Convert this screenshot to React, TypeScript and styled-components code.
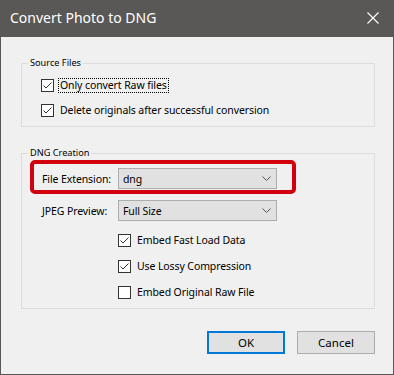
import React from 'react';
import styled, { createGlobalStyle } from 'styled-components';

const Global = createGlobalStyle`
  html, body { margin: 0; padding: 0; background: #f0f0f0; }
  * { box-sizing: border-box; }
`;

const Window = styled.div`
  width: 394px;
  height: 375px;
  display: flex;
  flex-direction: column;
  background: #f0f0f0;
  border: 1px solid #5a5856;
  border-top: none;
  font-family: "Noto Sans", "Open Sans", sans-serif;
  font-size: 10.5px;
  letter-spacing: -0.1px;
  color: #000;
`;

const TitleBar = styled.div`
  height: 37px;
  flex: none;
  margin: 0 -1px;
  background: #5a5856;
  color: #fff;
  display: flex;
  align-items: center;
  justify-content: space-between;
  padding: 0 15px 2px 10px;
  font-size: 14px;
  letter-spacing: 0;
`;

const Body = styled.div`
  flex: 1;
  display: flex;
  flex-direction: column;
  padding: 19px 18px 0 20px;
`;

const Group = styled.fieldset<{ top?: number }>`
  margin: ${p => p.top ?? 0}px 0 0 0;
  padding: 0;
  border: 1px solid #dcdcdc;
  min-width: 0;
`;

const Legend = styled.legend`
  margin-left: 6px;
  padding: 0 2px;
  font-size: 9.2px;
  line-height: 14px;
  letter-spacing: 0;
  color: #000;
`;

const GroupInner = styled.div<{ pad: string }>`
  display: flex;
  flex-direction: column;
  padding: ${p => p.pad};
`;

const CheckRow = styled.label<{ gap?: number }>`
  display: flex;
  align-items: center;
  height: 15px;
  margin-top: ${p => p.gap ?? 0}px;
`;

const Box = styled.span`
  width: 13px;
  height: 13px;
  flex: none;
  border: 1px solid #333;
  background: #fff;
  display: flex;
  align-items: center;
  justify-content: center;
`;

const CheckText = styled.span<{ focus?: boolean }>`
  margin-left: 4px;
  padding: 0 1px;
  line-height: 13px;
  border: 1px dotted ${p => (p.focus ? '#000' : 'transparent')};
  white-space: nowrap;
`;

const Highlight = styled.div`
  width: 266px;
  margin-left: 8px;
  border: 4px solid #d2000d;
  border-radius: 5px;
  padding: 4px 15px 1px 8px;
`;

const FieldRow = styled.div<{ indent?: number; top?: number }>`
  display: flex;
  align-items: center;
  padding-left: ${p => p.indent ?? 0}px;
  margin-top: ${p => p.top ?? 0}px;
`;

const FieldLabel = styled.span`
  width: 76px;
  flex: none;
  white-space: nowrap;
`;

const Select = styled.div`
  width: 159px;
  height: 21px;
  border: 1px solid #adadad;
  background: #e1e1e1;
  display: flex;
  align-items: center;
  justify-content: space-between;
  padding: 0 5px 0 4px;
`;

const Checks = styled.div`
  display: flex;
  flex-direction: column;
  padding-left: 96px;
  margin-top: 12px;
`;

const Buttons = styled.div`
  display: flex;
  justify-content: flex-end;
  gap: 12px;
  margin-top: 22px;
`;

const Button = styled.div<{ primary?: boolean }>`
  width: 78px;
  height: 23px;
  background: #e1e1e1;
  border: ${p => (p.primary ? '2px solid #0078d7' : '1px solid #adadad')};
  display: flex;
  align-items: center;
  justify-content: center;
  font-size: 11.5px;
  letter-spacing: 0;
`;

const Close = () => (
  <svg width="12" height="12" viewBox="0 0 12 12">
    <path d="M0.5 0.5 L11.5 11.5 M11.5 0.5 L0.5 11.5" stroke="#fff" strokeWidth="1.1" fill="none" />
  </svg>
);

const Chevron = () => (
  <svg width="9" height="5" viewBox="0 0 9 5">
    <path d="M0.5 0.5 L4.5 4.5 L8.5 0.5" stroke="#555" strokeWidth="1" fill="none" />
  </svg>
);

const Check = ({ on }: { on: boolean }) => (
  <Box>
    {on && (
      <svg width="11" height="11" viewBox="0 0 11 11">
        <path d="M1.5 5.5 L4 8 L9.5 2.5" stroke="#333" strokeWidth="1" fill="none" />
      </svg>
    )}
  </Box>
);

const App = () => {
  return (
    <>
      <Global />
      <Window>
        <TitleBar>
          <span>Convert Photo to DNG</span>
          <Close />
        </TitleBar>
        <Body>
          <Group>
            <Legend>Source Files</Legend>
            <GroupInner pad="8px 0 8px 19px">
              <CheckRow>
                <Check on />
                <CheckText focus>Only convert Raw files</CheckText>
              </CheckRow>
              <CheckRow gap={10}>
                <Check on />
                <CheckText>Delete originals after successful conversion</CheckText>
              </CheckRow>
            </GroupInner>
          </Group>
          <Group top={19}>
            <Legend>DNG Creation</Legend>
            <GroupInner pad="0 0 8px 0">
              <Highlight>
                <FieldRow>
                  <FieldLabel>File Extension:</FieldLabel>
                  <Select>
                    <span>dng</span>
                    <Chevron />
                  </Select>
                </FieldRow>
              </Highlight>
              <FieldRow indent={20} top={6}>
                <FieldLabel>JPEG Preview:</FieldLabel>
                <Select>
                  <span>Full Size</span>
                  <Chevron />
                </Select>
              </FieldRow>
              <Checks>
                <CheckRow>
                  <Check on />
                  <CheckText>Embed Fast Load Data</CheckText>
                </CheckRow>
                <CheckRow gap={11}>
                  <Check on />
                  <CheckText>Use Lossy Compression</CheckText>
                </CheckRow>
                <CheckRow gap={11}>
                  <Check on={false} />
                  <CheckText>Embed Original Raw File</CheckText>
                </CheckRow>
              </Checks>
            </GroupInner>
          </Group>
          <Buttons>
            <Button primary>OK</Button>
            <Button>Cancel</Button>
          </Buttons>
        </Body>
      </Window>
    </>
  );
};

export default App;
